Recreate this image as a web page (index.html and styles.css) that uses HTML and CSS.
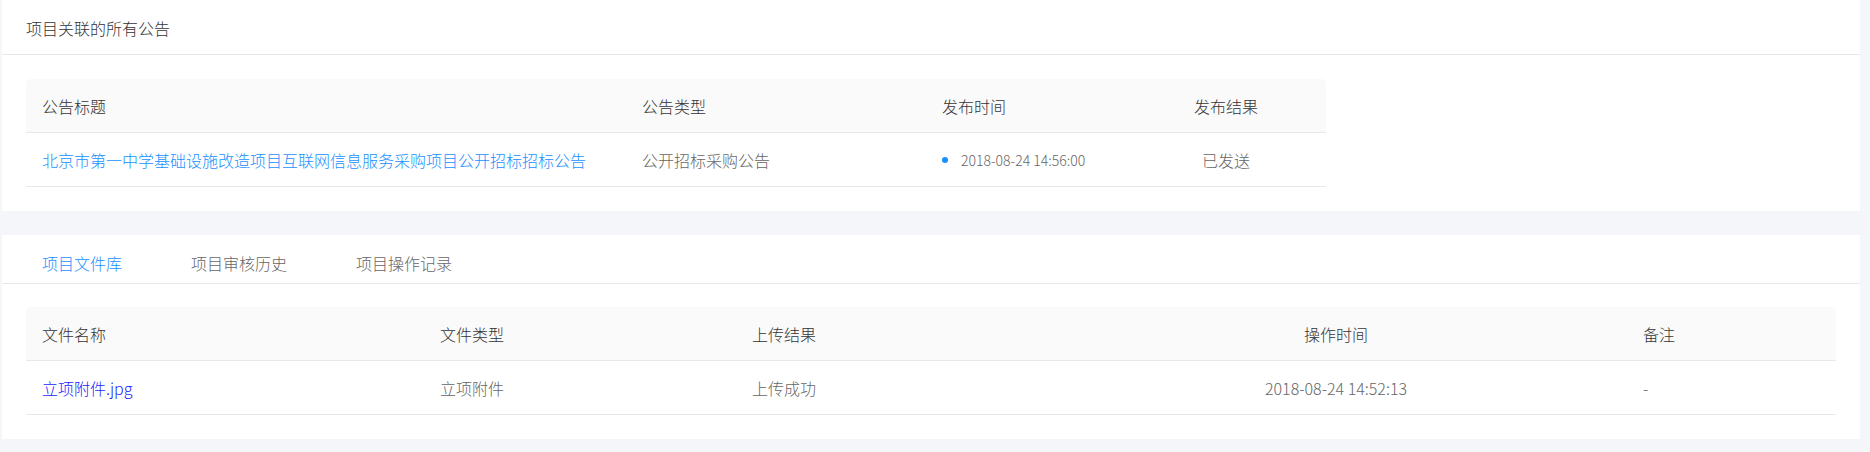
FILE: index.html
```html
<!DOCTYPE html>
<html lang="zh-CN">
<head>
<meta charset="utf-8">
<title>项目关联的所有公告</title>
<link rel="stylesheet" href="styles.css">
</head>
<body>
<div class="page">
  <section class="card">
    <div class="card-head">项目关联的所有公告</div>
    <div class="card-body">
      <div class="tbl tbl-notice">
        <div class="tr th">
          <div class="cell">公告标题</div>
          <div class="cell">公告类型</div>
          <div class="cell">发布时间</div>
          <div class="cell center">发布结果</div>
        </div>
        <div class="tr">
          <div class="cell"><a class="link" href="#">北京市第一中学基础设施改造项目互联网信息服务采购项目公开招标招标公告</a></div>
          <div class="cell muted">公开招标采购公告</div>
          <div class="cell muted small"><span class="dot"></span>2018-08-24 14:56:00</div>
          <div class="cell center muted">已发送</div>
        </div>
      </div>
    </div>
  </section>

  <section class="card">
    <div class="tabs">
      <div class="tab active">项目文件库</div>
      <div class="tab">项目审核历史</div>
      <div class="tab">项目操作记录</div>
    </div>
    <div class="card-body tight">
      <div class="tbl tbl-files">
        <div class="tr th">
          <div class="cell">文件名称</div>
          <div class="cell">文件类型</div>
          <div class="cell">上传结果</div>
          <div class="cell center">操作时间</div>
          <div class="cell">备注</div>
        </div>
        <div class="tr">
          <div class="cell"><a class="file-link" href="#">立项附件.jpg</a></div>
          <div class="cell muted">立项附件</div>
          <div class="cell muted">上传成功</div>
          <div class="cell center muted">2018-08-24 14:52:13</div>
          <div class="cell muted">-</div>
        </div>
      </div>
    </div>
  </section>
</div>
</body>
</html>
```

FILE: styles.css
```css
* { box-sizing: border-box; }
html, body {
  margin: 0;
  padding: 0;
  background: #f5f6fa;
}
body {
  font-family: "Noto Sans CJK SC", "Noto Sans", sans-serif;
  font-size: 16px;
  font-weight: 300;
  color: #333;
  line-height: 24px;
}
.page {
  padding: 0 10px 13px 2px;
  display: flex;
  flex-direction: column;
  gap: 24px;
  height: 452px;
  overflow: hidden;
}
.card {
  background: #fff;
}
.card-head {
  padding: 16px 24px 14px;
  border-bottom: 1px solid #e8e8e8;
  color: #333;
}
.card-body {
  padding: 24px;
}
.card-body.tight {
  padding-top: 23px;
}
.tabs {
  display: flex;
  gap: 37px;
  padding: 16px 24px 8px;
  border-bottom: 1px solid #e8e8e8;
}
.tab {
  padding: 0 16px;
  color: #666;
}
.tab.active {
  color: #1890ff;
}
.tbl-notice { width: 1300px; }
.tbl-notice .tr { grid-template-columns: 600px 300px 200px 200px; }
.tbl-files .tr { grid-template-columns: 398px 312px 309px 582px 1fr; }
.tr {
  display: grid;
  border-bottom: 1px solid #e8e8e8;
}
.tr.th {
  background: #fafafa;
  border-radius: 4px 4px 0 0;
  color: #333;
}
.cell {
  height: 53px;
  padding: 0 16px;
  display: flex;
  align-items: center;
  white-space: nowrap;
}
.cell.center { justify-content: center; }
.muted { color: #666; }
.small { font-size: 14px; }
.link {
  color: #1890ff;
  text-decoration: none;
}
.file-link {
  color: #2222ff;
  text-decoration: none;
}
.dot {
  width: 6px;
  height: 6px;
  border-radius: 50%;
  background: #1890ff;
  margin-right: 13px;
  flex: none;
}
```
